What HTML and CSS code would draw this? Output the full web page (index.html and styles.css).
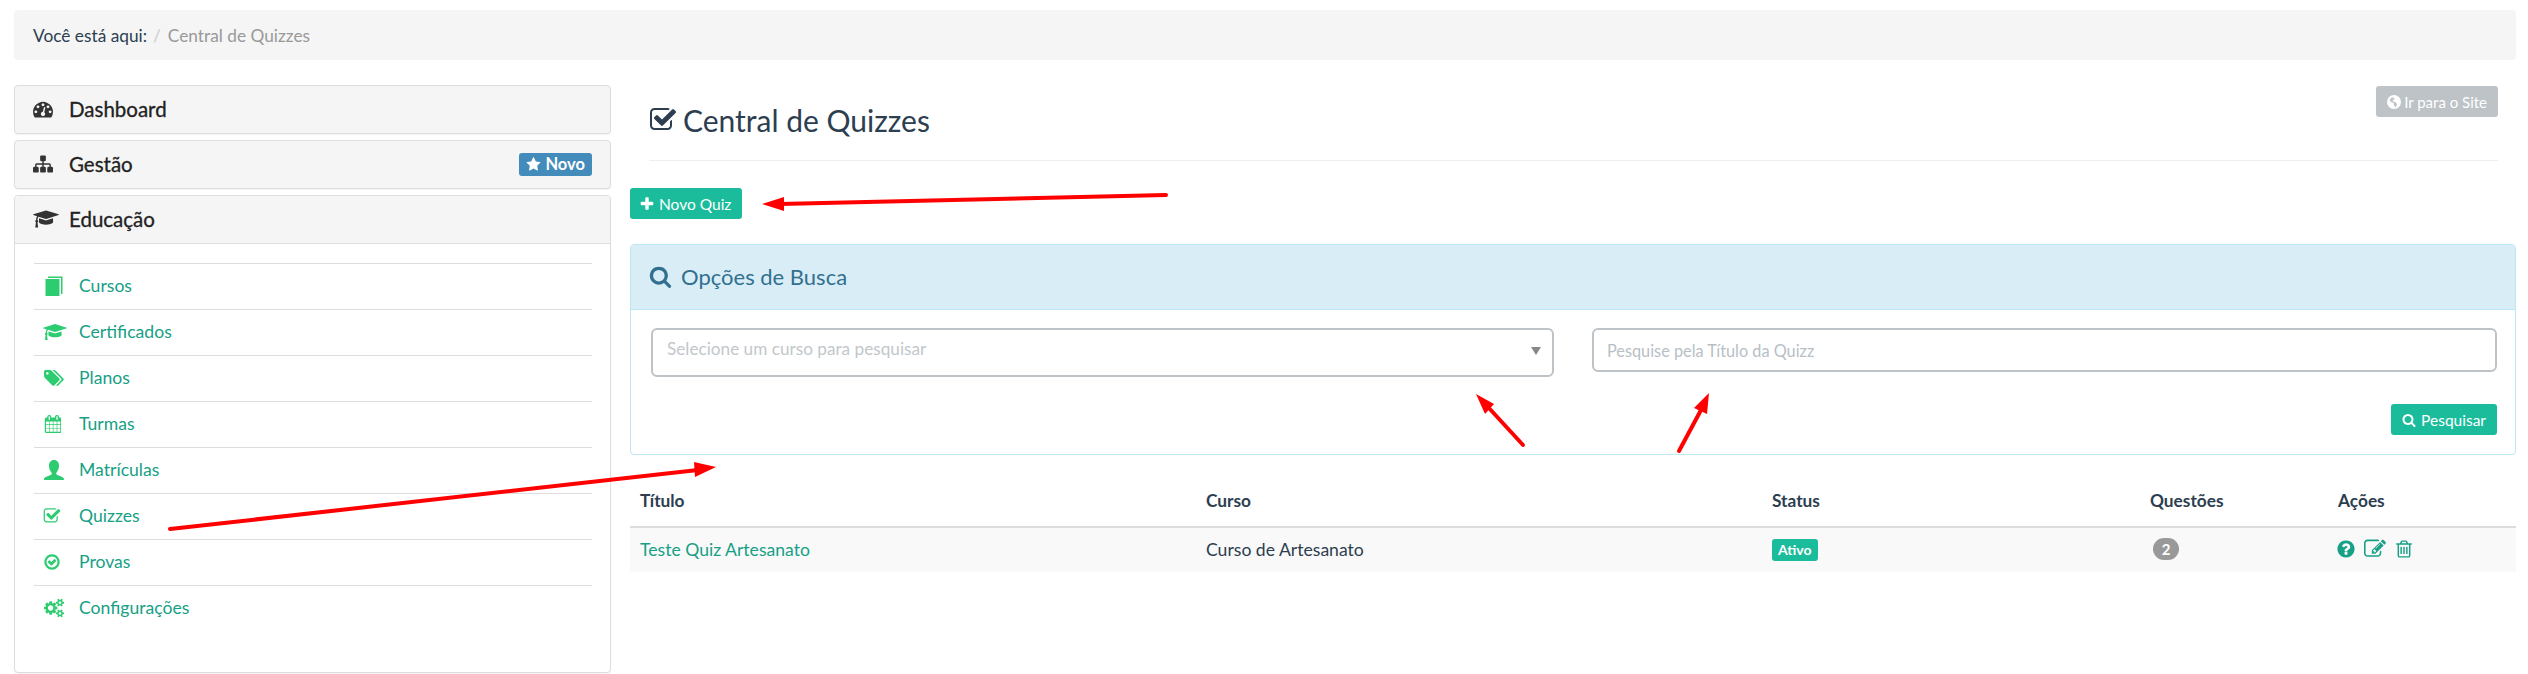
FILE: index.html
```html
<!DOCTYPE html>
<html lang="pt-BR">
<head>
<meta charset="utf-8">
<title>Central de Quizzes</title>
<link rel="stylesheet" href="styles.css">
</head>
<body>
<svg class="sprite" xmlns="http://www.w3.org/2000/svg">
  <symbol id="i-check-square" viewBox="0 0 1792 1792"><path d="M1472 930v318q0 119-84.5 203.5t-203.5 84.5h-832q-119 0-203.5-84.5t-84.5-203.5v-832q0-119 84.5-203.5t203.5-84.5h832q63 0 117 25 15 7 18 23 3 17-9 29l-49 49q-10 10-23 10-3 0-9-2-23-6-45-6h-832q-66 0-113 47t-47 113v832q0 66 47 113t113 47h832q66 0 113-47t47-113v-254q0-13 9-22l64-64q10-10 23-10 6 0 12 3 20 8 20 29zm231-489l-814 814q-24 24-57 24t-57-24l-430-430q-24-24-24-57t24-57l110-110q24-24 57-24t57 24l263 263 647-647q24-24 57-24t57 24l110 110q24 24 24 57t-24 57z"/></symbol>
  <symbol id="i-search" viewBox="0 0 1792 1792"><path d="M1216 832q0-185-131.5-316.5t-316.5-131.5-316.5 131.5-131.5 316.5 131.5 316.5 316.5 131.5 316.5-131.5 131.5-316.5zm512 832q0 52-38 90t-90 38q-54 0-90-38l-343-342q-179 124-399 124-143 0-273.5-55.5t-225-150-150-225-55.5-273.5 55.5-273.5 150-225 225-150 273.5-55.5 273.5 55.5 225 150 150 225 55.5 273.5q0 220-124 399l343 343q37 37 37 90z"/></symbol>
  <symbol id="i-plus" viewBox="0 0 1792 1792"><path d="M1600 736v192q0 40-28 68t-68 28h-416v416q0 40-28 68t-68 28h-192q-40 0-68-28t-28-68v-416h-416q-40 0-68-28t-28-68v-192q0-40 28-68t68-28h416v-416q0-40 28-68t68-28h192q40 0 68 28t28 68v416h416q40 0 68 28t28 68z"/></symbol>
  <symbol id="i-star" viewBox="0 0 1792 1792"><path d="M1728 647q0 22-26 48l-363 354 86 500q1 7 1 20 0 21-10.5 35.5t-30.5 14.5q-19 0-40-12l-449-236-449 236q-22 12-40 12-21 0-31.5-14.5t-10.5-35.5q0-6 2-20l86-500-364-354q-25-27-25-48 0-37 56-46l502-73 225-455q19-41 49-41t49 41l225 455 502 73q56 9 56 46z"/></symbol>
  <symbol id="i-question" viewBox="0 0 1792 1792"><path d="M1024 1376v-192q0-14-9-23t-23-9h-192q-14 0-23 9t-9 23v192q0 14 9 23t23 9h192q14 0 23-9t9-23zm256-672q0-88-55.5-163t-138.5-116-170-41q-243 0-371 213-15 24 8 42l132 100q7 6 19 6 16 0 25-12 53-68 86-92 34-24 86-24 48 0 85.5 26t37.5 59q0 38-20 61t-68 45q-63 28-115.5 86.5t-52.5 125.5v36q0 14 9 23t23 9h192q14 0 23-9t9-23q0-19 21.5-49.5t54.5-49.5q32-18 49-28.5t46-35 44.5-48 28-60.5 12.5-81zm384 192q0 209-103 385.5t-279.5 279.5-385.5 103-385.5-103-279.5-279.5-103-385.5 103-385.5 279.5-279.5 385.5-103 385.5 103 279.5 279.5 103 385.5z"/></symbol>
  <symbol id="i-trash" viewBox="0 0 1792 1792"><path d="M704 736v576q0 14-9 23t-23 9h-64q-14 0-23-9t-9-23v-576q0-14 9-23t23-9h64q14 0 23 9t9 23zm256 0v576q0 14-9 23t-23 9h-64q-14 0-23-9t-9-23v-576q0-14 9-23t23-9h64q14 0 23 9t9 23zm256 0v576q0 14-9 23t-23 9h-64q-14 0-23-9t-9-23v-576q0-14 9-23t23-9h64q14 0 23 9t9 23zm128 724v-948h-896v948q0 22 7 40.5t14.5 27 10.5 8.5h832q3 0 10.5-8.5t14.5-27 7-40.5zm-672-1076h448l-48-117q-7-9-17-11h-317q-10 2-17 11zm928 32v64q0 14-9 23t-23 9h-96v948q0 83-47 143.5t-113 60.5h-832q-66 0-113-58.5t-47-141.5v-952h-96q-14 0-23-9t-9-23v-64q0-14 9-23t23-9h309l70-167q15-37 54-63t79-26h320q40 0 79 26t54 63l70 167h309q14 0 23 9t9 23z"/></symbol>
  <symbol id="i-edit" viewBox="0 0 1792 1792"><path d="M888 1184l116-116-152-152-116 116v56h96v96h56zm440-720q-16-16-33 1l-350 350q-17 17-1 33t33-1l350-350q17-17 1-33zm80 594v190q0 119-84.5 203.5t-203.5 84.5h-832q-119 0-203.5-84.5t-84.5-203.5v-832q0-119 84.5-203.5t203.5-84.5h832q63 0 117 25 15 7 18 23 3 17-9 29l-49 49q-14 14-32 8-23-6-45-6h-832q-66 0-113 47t-47 113v832q0 66 47 113t113 47h832q66 0 113-47t47-113v-126q0-13 9-22l64-64q15-15 35-7t20 29zm-96-738l288 288-672 672h-288v-288zm444 132l-92 92-288-288 92-92q28-28 68-28t68 28l152 152q28 28 28 68t-28 68z"/></symbol>
  <symbol id="i-cap" viewBox="0 0 2304 1792"><path d="M1774 836l18 316q4 69-82 128t-235 93.5-323 34.5-323-34.5-235-93.5-82-128l18-316 574 181q22 7 48 7t48-7zm530-324q0 23-22 31l-1120 352q-4 1-10 1t-10-1l-652-206q-43 34-71 111.5t-34 178.5q63 36 63 109 0 69-58 107l58 433q2 14-8 25-9 11-24 11h-192q-15 0-24-11-10-11-8-25l58-433q-58-38-58-107 0-73 65-111 11-207 98-330l-333-104q-22-8-22-31t22-31l1120-352q4-1 10-1t10 1l1120 352q22 8 22 31z"/></symbol>
  <symbol id="i-book" viewBox="0 0 17 20"><path d="M0 3h14v17H0z"/><path d="M2.500.5H17V18h-1.500V2H2.500z"/></symbol>
  <symbol id="i-calendar" viewBox="0 0 1664 1792"><path d="M192 1664h288v-288h-288v288zm352 0h320v-288h-320v288zm-352-352h288v-320h-288v320zm352 0h320v-320h-320v320zm-352-384h288v-288h-288v288zm736 736h320v-288h-320v288zm-384-736h320v-288h-320v288zm768 736h288v-288h-288v288zm-384-352h320v-320h-320v320zm-352-864v-288q0-13-9.500-22.500t-22.500-9.500h-64q-13 0-22.500 9.500t-9.500 22.500v288q0 13 9.500 22.500t22.500 9.500h64q13 0 22.500-9.500t9.500-22.500zm736 864h288v-320h-288v320zm-384-384h320v-288h-320v288zm384 0h288v-288h-288v288zm32-480v-288q0-13-9.500-22.500t-22.500-9.500h-64q-13 0-22.500 9.500t-9.500 22.500v288q0 13 9.500 22.500t22.500 9.500h64q13 0 22.500-9.500t9.500-22.500zm384-64v1280q0 52-38 90t-90 38h-1408q-52 0-90-38t-38-90v-1280q0-52 38-90t90-38h128v-96q0-66 47-113t113-47h64q66 0 113 47t47 113v96h384v-96q0-66 47-113t113-47h64q66 0 113 47t47 113v96h128q52 0 90 38t38 90z"/></symbol>
  <symbol id="i-check-circle" viewBox="0 0 1792 1792"><path d="M1299 813l-422 422q-19 19-45 19t-45-19l-294-294q-19-19-19-45t19-45l102-102q19-19 45-19t45 19l147 147 275-275q19-19 45-19t45 19l102 102q19 19 19 45t-19 45zm141 83q0-148-73-273t-198-198-273-73-273 73-198 198-73 273 73 273 198 198 273 73 273-73 198-198 73-273zm224 0q0 209-103 385.500t-279.500 279.500-385.500 103-385.500-103-279.500-279.500-103-385.500 103-385.500 279.500-279.500 385.500-103 385.500 103 279.500 279.500 103 385.500z"/></symbol>
  <symbol id="i-tags" viewBox="0 0 1920 1792"><path d="M448 448q0-53-37.500-90.500t-90.500-37.500-90.500 37.500-37.500 90.500 37.500 90.500 90.500 37.500 90.500-37.500 37.500-90.500zm1067 576q0 53-37 90l-491 492q-39 37-91 37-53 0-90-37l-715-716q-38-37-64.500-101t-26.500-117v-416q0-52 38-90t90-38h416q53 0 117 26.500t102 64.500l715 714q37 39 37 91zm384 0q0 53-37 90l-491 492q-39 37-91 37-36 0-59-14t-53-45l470-470q37-37 37-90 0-52-37-91l-715-714q-38-38-102-64.500t-117-26.500h224q53 0 117 26.500t102 64.500l715 714q37 39 37 91z"/></symbol>
  <symbol id="i-user" viewBox="0 0 24 24"><path d="M12 0c4 0 6 3 6 7 0 3-1 6-3 8-.5.600-.5 2 .5 2.600l7 3c1 .5 1.500 1.400 1.500 3.400H0c0-2 .5-2.900 1.500-3.400l7-3c1-.6 1-2 .5-2.600-2-2-3-5-3-8 0-4 2-7 6-7z"/></symbol>
  <symbol id="i-cogs" viewBox="0 0 1920 1792"><path d="M896 896q0-106-75-181t-181-75-181 75-75 181 75 181 181 75 181-75 75-181zm768 512q0-52-38-90t-90-38-90 38-38 90q0 53 37.500 90.500t90.500 37.500 90.500-37.500 37.500-90.500zm0-1024q0-52-38-90t-90-38-90 38-38 90q0 53 37.500 90.500t90.500 37.500 90.500-37.500 37.500-90.500zm-384 421v185q0 10-7 19.500t-16 10.500l-155 24q-11 35-32 76 34 48 90 115 7 11 7 20 0 12-7 19-23 30-82.500 89.500t-78.500 59.500q-11 0-21-7l-115-90q-37 19-77 31-11 108-23 155-7 24-30 24h-186q-11 0-20-7.500t-10-17.500l-23-153q-34-10-75-31l-118 89q-7 7-20 7-11 0-21-8-144-133-144-160 0-9 7-19 10-14 41-53t47-61q-23-44-35-82l-152-24q-10-1-17-9.500t-7-19.500v-185q0-10 7-19.500t16-10.500l155-24q11-35 32-76-34-48-90-115-7-11-7-20 0-12 7-20 22-30 82-89t79-59q11 0 21 7l115 90q34-18 77-32 11-108 23-154 7-24 30-24h186q11 0 20 7.500t10 17.500l23 153q34 10 75 31l118-89q8-7 20-7 11 0 21 8 144 133 144 160 0 8-7 19-12 16-42 54t-45 60q23 48 34 82l152 23q10 2 17 10.500t7 19.500zm640 533v140q0 16-149 31-12 27-30 52 51 113 51 138 0 4-4 7-122 71-124 71-8 0-46-47t-52-68q-20 2-30 2t-30-2q-14 21-52 68t-46 47q-2 0-124-71-4-3-4-7 0-25 51-138-18-25-30-52-149-15-149-31v-140q0-16 149-31 13-29 30-52-51-113-51-138 0-4 4-7 4-2 35-20t59-34 30-16q8 0 46 46.500t52 67.500q20-2 30-2t30 2q51-71 92-112l6-2q4 0 124 70 4 3 4 7 0 25-51 138 17 23 30 52 149 15 149 31zm0-1024v140q0 16-149 31-12 27-30 52 51 113 51 138 0 4-4 7-122 71-124 71-8 0-46-47t-52-68q-20 2-30 2t-30-2q-14 21-52 68t-46 47q-2 0-124-71-4-3-4-7 0-25 51-138-18-25-30-52-149-15-149-31v-140q0-16 149-31 13-29 30-52-51-113-51-138 0-4 4-7 4-2 35-20t59-34 30-16q8 0 46 46.500t52 67.500q20-2 30-2t30 2q51-71 92-112l6-2q4 0 124 70 4 3 4 7 0 25-51 138 17 23 30 52 149 15 149 31z"/></symbol>
  <symbol id="i-dashboard" viewBox="0 0 1792 1792"><path d="M384 1152q0-53-37.500-90.500t-90.500-37.500-90.500 37.500-37.500 90.500 37.500 90.500 90.500 37.500 90.500-37.500 37.500-90.500zm192-448q0-53-37.500-90.500t-90.500-37.500-90.500 37.500-37.500 90.500 37.500 90.500 90.500 37.500 90.500-37.500 37.500-90.500zm428 481l101-382q6-26-7.500-48.500t-38.500-29.500-48 6.500-30 39.500l-101 382q-60 5-107 43.500t-63 98.500q-20 77 20 146t117 89 146-20 89-117q16-60-6-117t-72-91zm660-33q0-53-37.500-90.500t-90.500-37.500-90.500 37.500-37.500 90.500 37.500 90.500 90.500 37.500 90.500-37.500 37.500-90.500zm-640-640q0-53-37.500-90.500t-90.500-37.500-90.500 37.500-37.500 90.500 37.500 90.500 90.500 37.500 90.500-37.500 37.500-90.500zm448 192q0-53-37.500-90.500t-90.500-37.500-90.500 37.500-37.500 90.500 37.500 90.500 90.500 37.500 90.500-37.500 37.500-90.500zm320 448q0 261-141 483-19 29-54 29h-1402q-35 0-54-29-141-221-141-483 0-182 71-348t191-286 286-191 348-71 348 71 286 191 191 286 71 348z"/></symbol>
  <symbol id="i-sitemap" viewBox="0 0 1792 1792"><path d="M1792 1248v320q0 40-28 68t-68 28h-320q-40 0-68-28t-28-68v-320q0-40 28-68t68-28h96v-192h-512v192h96q40 0 68 28t28 68v320q0 40-28 68t-68 28h-320q-40 0-68-28t-28-68v-320q0-40 28-68t68-28h96v-192h-512v192h96q40 0 68 28t28 68v320q0 40-28 68t-68 28h-320q-40 0-68-28t-28-68v-320q0-40 28-68t68-28h96v-192q0-52 38-90t90-38h512v-192h-96q-40 0-68-28t-28-68v-320q0-40 28-68t68-28h320q40 0 68 28t28 68v320q0 40-28 68t-68 28h-96v192h512q52 0 90 38t38 90v192h96q40 0 68 28t28 68z"/></symbol>
  <symbol id="i-globe" viewBox="0 0 16 16"><path fill-rule="evenodd" d="M8 0a8 8 0 1 1 0 16A8 8 0 0 1 8 0zM5 3 3 5.500l1.500 2.500 3 1 .5 3 2 2 1.500-3.500-2-2.500-3-.5.500-2 2-1-1-1.500z"/></symbol>
</svg>

<div class="breadcrumb">
  <span class="crumb-label">Você está aqui:</span>
  <span class="crumb-sep">/</span>
  <span class="crumb-current">Central de Quizzes</span>
</div>

<div class="layout">
  <aside class="sidebar">
    <div class="side-panel">
      <h4 class="side-head"><svg class="ico ico-head"><use href="#i-dashboard"/></svg>Dashboard</h4>
    </div>
    <div class="side-panel">
      <h4 class="side-head"><svg class="ico ico-head"><use href="#i-sitemap"/></svg>Gestão
        <span class="tag-new"><svg class="ico ico-star"><use href="#i-star"/></svg>Novo</span>
      </h4>
    </div>
    <div class="side-panel side-open">
      <h4 class="side-head side-head-open"><svg class="ico ico-head ico-cap"><use href="#i-cap"/></svg>Educação</h4>
      <ul class="side-menu">
        <li><a href="#"><svg class="ico ico-menu"><use href="#i-book"/></svg>Cursos</a></li>
        <li><a href="#"><svg class="ico ico-menu ico-wide"><use href="#i-cap"/></svg>Certificados</a></li>
        <li><a href="#"><svg class="ico ico-menu"><use href="#i-tags"/></svg>Planos</a></li>
        <li><a href="#"><svg class="ico ico-menu ico-cal"><use href="#i-calendar"/></svg>Turmas</a></li>
        <li><a href="#"><svg class="ico ico-menu"><use href="#i-user"/></svg>Matrículas</a></li>
        <li><a href="#"><svg class="ico ico-menu ico-small"><use href="#i-check-square"/></svg>Quizzes</a></li>
        <li><a href="#"><svg class="ico ico-menu ico-small"><use href="#i-check-circle"/></svg>Provas</a></li>
        <li><a href="#"><svg class="ico ico-menu"><use href="#i-cogs"/></svg>Configurações</a></li>
      </ul>
    </div>
  </aside>

  <main class="content">
    <div class="page-head">
      <h2 class="page-title"><svg class="ico ico-title"><use href="#i-check-square"/></svg>Central de Quizzes</h2>
      <a class="btn btn-gray" href="#"><svg class="ico ico-globe"><use href="#i-globe"/></svg>Ir para o Site</a>
    </div>

    <a class="btn btn-green btn-new" href="#"><svg class="ico ico-plus"><use href="#i-plus"/></svg>Novo Quiz</a>

    <section class="search-panel">
      <h3 class="search-head"><svg class="ico ico-search"><use href="#i-search"/></svg>Opções de Busca</h3>
      <div class="search-body">
        <div class="search-fields">
          <div class="fake-select">Selecione um curso para pesquisar<span class="caret"></span></div>
          <input class="text-input" type="text" placeholder="Pesquise pela Título da Quizz">
        </div>
        <div class="search-actions">
          <a class="btn btn-green" href="#"><svg class="ico ico-btn"><use href="#i-search"/></svg>Pesquisar</a>
        </div>
      </div>
    </section>

    <table class="grid">
      <colgroup>
        <col class="col-wide"><col class="col-wide"><col class="col-status"><col class="col-small"><col class="col-small">
      </colgroup>
      <thead>
        <tr><th>Título</th><th>Curso</th><th>Status</th><th>Questões</th><th>Ações</th></tr>
      </thead>
      <tbody>
        <tr>
          <td><a href="#">Teste Quiz Artesanato</a></td>
          <td>Curso de Artesanato</td>
          <td><span class="label-ok">Ativo</span></td>
          <td><span class="count">2</span></td>
          <td>
            <div class="actions">
              <a href="#"><svg class="ico ico-act"><use href="#i-question"/></svg></a>
              <a href="#"><svg class="ico ico-edit"><use href="#i-edit"/></svg></a>
              <a href="#"><svg class="ico ico-act"><use href="#i-trash"/></svg></a>
            </div>
          </td>
        </tr>
      </tbody>
    </table>
  </main>
</div>

<svg class="arrows" xmlns="http://www.w3.org/2000/svg" width="2528" height="674">
  <g class="arrow">
    <line x1="1166" y1="195" x2="780" y2="204"/>
    <polygon points="762,204 784,197 784,211"/>
  </g>
  <g class="arrow">
    <line x1="170" y1="529" x2="698" y2="470"/>
    <polygon points="716,467 694,462 695,477"/>
  </g>
  <g class="arrow">
    <line x1="1523" y1="445" x2="1488" y2="407"/>
    <polygon points="1476,394 1494,404 1485,414"/>
  </g>
  <g class="arrow">
    <line x1="1679" y1="451" x2="1701" y2="410"/>
    <polygon points="1709,393 1694,408 1707,414"/>
  </g>
</svg>
</body>
</html>
```

FILE: styles.css
```css
* { box-sizing: border-box; }
html, body { margin: 0; padding: 0; }
body {
  position: relative;
  height: 674px;
  overflow: hidden;
  background: #fff;
  color: #2c3e50;
  font-family: Lato, "Open Sans", sans-serif;
  font-size: 16px;
  padding: 10px 12px 0 14px;
}
a { text-decoration: none; }
.sprite { display: none; }
.ico { display: inline-block; fill: currentColor; flex: none; }

.breadcrumb {
  height: 50px;
  display: flex;
  align-items: center;
  padding-left: 19px;
  background: #f5f5f5;
  border-radius: 4px;
  font-size: 17.3px;
}
.crumb-sep { color: #ccc; margin: 0 7px 0 6px; }
.crumb-current { color: #999; }

.layout { display: flex; margin-top: 25px; }
.sidebar { width: 597px; flex: none; display: flex; flex-direction: column; gap: 6px; }
.side-panel {
  border: 1px solid #ddd;
  border-radius: 4px;
  background: #f5f5f5;
  box-shadow: 0 1px 1px rgba(0, 0, 0, .05);
}
.side-open { height: 478px; background: #fff; }
.side-head {
  display: flex;
  align-items: center;
  height: 47px;
  margin: 0;
  padding: 0 18px 2px;
  font-size: 20.5px;
  font-weight: 400;
  color: #222;
  -webkit-text-stroke: .3px #222;
}
.side-head-open { background: #f5f5f5; border-bottom: 1px solid #ddd; border-radius: 3px 3px 0 0; height: 48px; padding-bottom: 2px; }
.ico-head { width: 20px; height: 20px; margin-right: 16px; color: #333; }
.ico-cap { width: 26px; margin-right: 10px; }
.tag-new {
  margin-left: auto;
  margin-top: 1px;
  display: flex;
  align-items: center;
  height: 23px;
  padding: 0 7px;
  background: #428bba;
  color: #fff;
  border-radius: 3px;
  font-size: 16.5px;
  font-weight: 700;
  -webkit-text-stroke: 0;
}
.ico-star { width: 15px; height: 15px; margin-right: 4px; }

.side-menu { list-style: none; margin: 19px 18px 0 19px; padding: 0; }
.side-menu li { height: 46px; border-top: 1px solid #ddd; }
.side-menu a {
  display: flex;
  align-items: center;
  height: 100%;
  padding: 0 0 2px 10px;
  color: #16a085;
  font-size: 17.6px;
}
.ico-menu { width: 20px; height: 20px; margin-right: 15px; color: #2ecc71; }
.ico-wide { width: 24px; margin-left: -1px; margin-right: 12px; }
.ico-cal { width: 17px; height: 18px; margin-right: 18px; }
.ico-small { width: 18px; height: 18px; margin-left: -1px; margin-right: 18px; }

.content { flex: 1; min-width: 0; margin-left: 19px; }
.page-head {
  display: flex;
  justify-content: space-between;
  align-items: flex-start;
  height: 76px;
  margin: 0 18px 0 19px;
  border-bottom: 1px solid #eee;
  padding-top: 1px;
}
.page-title {
  display: flex;
  align-items: center;
  margin: 15px 0 0;
  font-size: 30px;
  font-weight: 400;
  line-height: 38px;
  color: #2c3e50;
}
.ico-title { width: 28px; height: 28px; margin: 0 6px 0 0; }

.btn {
  display: inline-flex;
  align-items: center;
  height: 31px;
  padding: 0 11px;
  border-radius: 3px;
  color: #fff;
  font-size: 15.5px;
}
.btn-gray { background: #bdc3c7; font-size: 15px; }
.btn-green { background: #1abc9c; }
.btn-new { margin-top: 27px; }
.ico-btn { width: 14px; height: 14px; margin-right: 5px; }
.ico-globe { width: 14px; height: 14px; margin-right: 3px; }
.ico-plus { width: 16px; height: 16px; margin: 0 4px 0 -2px; }

.search-panel {
  margin-top: 25px;
  height: 211px;
  border: 1px solid #bce8f1;
  border-radius: 4px;
}
.search-head {
  display: flex;
  align-items: center;
  height: 65px;
  margin: 0;
  padding: 0 19px 2px;
  background: #d9edf7;
  border-bottom: 1px solid #bce8f1;
  color: #31708f;
  font-size: 22px;
  font-weight: 400;
}
.ico-search { width: 23px; height: 23px; margin: 0 9px 0 -1px; }
.search-body { padding: 18px 18px 0 20px; }
.search-fields { display: grid; grid-template-columns: 903px 1fr; gap: 38px; align-items: start; }
.fake-select, .text-input {
  border: 2px solid #bdc3c7;
  border-radius: 6px;
  font-family: inherit;
  color: #c2c7cb;
  background: #fff;
}
.fake-select {
  position: relative;
  height: 49px;
  padding: 8px 14px 0;
  font-size: 17.2px;
}
.caret {
  position: absolute;
  right: 11px;
  top: 17px;
  border-left: 5px solid transparent;
  border-right: 5px solid transparent;
  border-top: 8px solid #888;
}
.text-input { height: 44px; width: 100%; padding: 0 13px; outline: none; font-size: 16.3px; }
.text-input::placeholder { color: #b8c0c6; opacity: 1; }
.search-actions { display: flex; justify-content: flex-end; margin-top: 27px; }

.grid { width: 1886px; margin-top: 0; border-collapse: collapse; table-layout: fixed; }
.col-wide { width: 566px; }
.col-status { width: 378px; }
.col-small { width: 188px; }
.grid th {
  height: 72px;
  padding: 20px 10px 0;
  text-align: left;
  font-size: 17.3px;
  font-weight: 700;
  border-bottom: 2px solid #ddd;
  color: #2c3e50;
}
.grid td { height: 45px; padding: 0 10px 2px; background: #f9f9f9; font-size: 17.6px; }
.grid td a { color: #16a085; }
.label-ok {
  display: inline-block;
  padding: 0 6px;
  height: 22px;
  line-height: 22px;
  background: #1abc9c;
  border-radius: 3px;
  color: #fff;
  font-size: 14px;
  font-weight: 700;
}
.count {
  display: inline-block;
  width: 26px;
  height: 22px;
  margin-left: 3px;
  line-height: 22px;
  text-align: center;
  background: #999;
  border-radius: 11px;
  color: #fff;
  font-size: 15px;
  font-weight: 700;
}
.actions { display: flex; align-items: center; gap: 8px; margin-left: -2.500px; }
.actions a { display: flex; }
.ico-act { width: 20px; height: 20px; }
.ico-edit { width: 22px; height: 22px; }

.arrows { position: absolute; left: 0; top: 0; pointer-events: none; }
.arrow line { stroke: #f00; stroke-width: 4; stroke-linecap: round; }
.arrow polygon { fill: #f00; }
```
